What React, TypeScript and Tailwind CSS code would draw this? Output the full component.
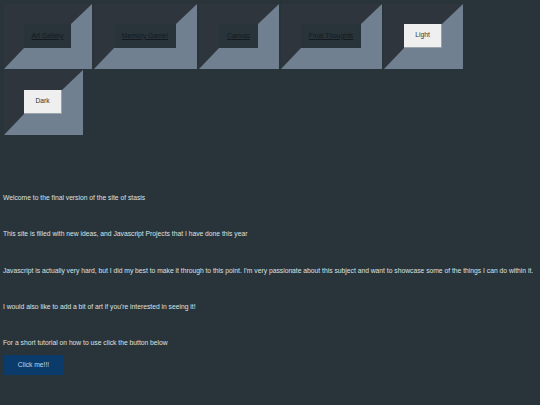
import React from "react";

const border =
  "border-t-[20px] border-l-[20px] border-r-[21px] border-b-[21px] border-t-[#2f353c] border-l-[#2f353c] border-r-[#708090] border-b-[#708090] border-solid";

function NavLink({ label, w }: { label: string; w: string }) {
  return (
    <div className={border}>
      <div className={`${w} h-[24px] flex items-center justify-center bg-[#28343a]`}>
        <a href="#" className="underline text-[#141a1e] leading-none whitespace-nowrap">
          {label}
        </a>
      </div>
    </div>
  );
}

function ThemeButton({ label }: { label: string }) {
  return (
    <div className={border}>
      <button className="w-[38px] h-[24px] flex items-center justify-center bg-[#efefef] text-[#333] border-r border-b border-[#9aa3ab] leading-none">
        {label}
      </button>
    </div>
  );
}

export default function App() {
  const paras = [
    "Welcome to the final version of the site of stasis",
    "This site is filled with new ideas, and Javascript Projects that I have done this year",
    "Javascript is actually very hard, but I did my best to make it through to this point. I'm very passionate about this subject and want to showcase some of the things I can do within it.",
    "I would also like to add a bit of art if you're interested in seeing it!",
    "For a short tutorial on how to use click the button below",
  ];
  return (
    <div
      className="w-[540px] h-[405px] bg-[#28343a] overflow-hidden text-[6.74px] text-[#dde1e4]"
      style={{ fontFamily: '"Liberation Sans", Arial, sans-serif' }}
    >
      <div className="flex flex-wrap gap-x-[2px] gap-y-[1px] pl-[4px] pt-[4px] w-[480px]">
        <NavLink label="Art Gallery" w="w-[47px]" />
        <NavLink label="Memory Game!" w="w-[62px]" />
        <NavLink label="Canvas" w="w-[39px]" />
        <NavLink label="Final Thoughts" w="w-[60px]" />
        <ThemeButton label="Light" />
        <ThemeButton label="Dark" />
      </div>
      <div className="flex flex-col gap-[28.3px] pl-[3px] mt-[59px]">
        {paras.map((p) => (
          <p key={p} className="leading-[8px] h-[8px] whitespace-nowrap">
            {p}
          </p>
        ))}
      </div>
      <div className="pl-[4px] mt-[8px]">
        <button className="w-[59px] h-[20px] bg-[#0b3b6b] text-[#c4d4e4] flex items-center justify-center leading-none">
          Click me!!!
        </button>
      </div>
    </div>
  );
}
